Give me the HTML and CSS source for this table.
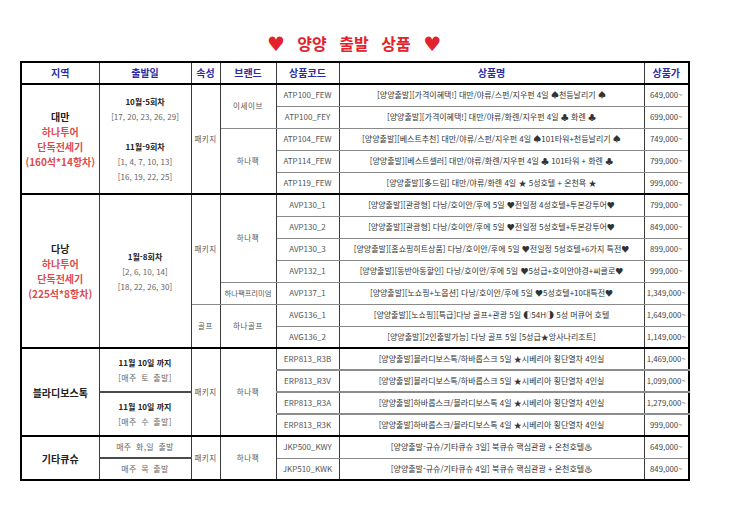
FILE: index.html
```html
<!DOCTYPE html>
<html lang="ko">
<head>
<meta charset="utf-8">
<title>양양 출발 상품</title>
<link rel="stylesheet" href="styles.css">
</head>
<body>
<div class="page">
  <h1 class="title"><span class="heart">♥</span> 양양 출발 상품 <span class="heart">♥</span></h1>
  <table class="grid">
    <colgroup>
      <col class="c-region"><col class="c-date"><col class="c-type"><col class="c-brand"><col class="c-code"><col class="c-name"><col class="c-price">
    </colgroup>
    <thead>
      <tr class="head">
        <th>지역</th><th>출발일</th><th>속성</th><th>브랜드</th><th>상품코드</th><th>상품명</th><th>상품가</th>
      </tr>
    </thead>
    <tbody>
      <tr class="sep">
        <td rowspan="5" class="region"><div class="rg">대만</div><div class="red">하나투어</div><div class="red">단독전세기</div><div class="red">(160석*14항차)</div></td>
        <td rowspan="5" class="date"><div class="dh">10월-5회차</div><div>[17, 20, 23, 26, 29]</div><div>&nbsp;</div><div class="dh">11월-9회차</div><div>[1, 4, 7, 10, 13]</div><div>[16, 19, 22, 25]</div></td>
        <td rowspan="5" class="type">패키지</td>
        <td rowspan="2" class="brand">이세이브</td>
        <td class="code">ATP100_FEW</td><td class="name">[양양출발][가격이혜택!] 대만/야류/스펀/지우펀 4일 ♠천등날리기 ♠</td><td class="price">649,000~</td>
      </tr>
      <tr><td class="code">ATP100_FEY</td><td class="name">[양양출발][가격이혜택!] 대만/야류/화롄/지우펀 4일 ♣ 화롄 ♣</td><td class="price">699,000~</td></tr>
      <tr>
        <td rowspan="3" class="brand">하나팩</td>
        <td class="code">ATP104_FEW</td><td class="name">[양양출발][베스트추천] 대만/야류/스펀/지우펀 4일 ♠101타워+천등날리기 ♠</td><td class="price">749,000~</td>
      </tr>
      <tr><td class="code">ATP114_FEW</td><td class="name">[양양출발][베스트셀러] 대만/야류/화롄/지우펀 4일 ♣ 101타워 + 화롄 ♣</td><td class="price">799,000~</td></tr>
      <tr><td class="code">ATP119_FEW</td><td class="name">[양양출발][多드림] 대만/야류/화롄 4일 ★ 5성호텔 + 온천욕 ★</td><td class="price">999,000~</td></tr>

      <tr class="sep">
        <td rowspan="7" class="region"><div class="rg">다낭</div><div class="red">하나투어</div><div class="red">단독전세기</div><div class="red">(225석*8항차)</div></td>
        <td rowspan="7" class="date"><div class="dh">1월-8회차</div><div>[2, 6, 10, 14]</div><div>[18, 22, 26, 30]</div></td>
        <td rowspan="5" class="type">패키지</td>
        <td rowspan="4" class="brand">하나팩</td>
        <td class="code">AVP130_1</td><td class="name">[양양출발][관광형] 다낭/호이안/후에 5일 ♥전일정 4성호텔+투본강투어♥</td><td class="price">799,000~</td>
      </tr>
      <tr><td class="code">AVP130_2</td><td class="name">[양양출발][관광형] 다낭/호이안/후에 5일 ♥전일정 5성호텔+투본강투어♥</td><td class="price">849,000~</td></tr>
      <tr><td class="code">AVP130_3</td><td class="name">[양양출발][홈쇼핑히트상품] 다낭/호이안/후에 5일 ♥전일정 5성호텔+6가지 특전♥</td><td class="price">899,000~</td></tr>
      <tr><td class="code">AVP132_1</td><td class="name">[양양출발][동반아동할인] 다낭/호이안/후에 5일 ♥5성급+호이안야경+씨클로♥</td><td class="price">999,000~</td></tr>
      <tr><td class="brand small">하나팩프리미엄</td><td class="code">AVP137_1</td><td class="name">[양양출발][노쇼핑+노옵션] 다낭/호이안/후에 5일 ♥5성호텔+10대특전♥</td><td class="price">1,349,000~</td></tr>
      <tr>
        <td rowspan="2" class="type">골프</td>
        <td rowspan="2" class="brand">하나골프</td>
        <td class="code">AVG136_1</td><td class="name">[양양출발][노쇼핑][특급]다낭 골프+관광 5일 ◐54H◑ 5성 머큐어 호텔</td><td class="price">1,649,000~</td>
      </tr>
      <tr><td class="code">AVG136_2</td><td class="name">[양양출발][2인출발가능] 다낭 골프 5일 [5성급★앙사나리조트]</td><td class="price">1,149,000~</td></tr>

      <tr class="sep">
        <td rowspan="4" class="region"><div class="rg">블라디보스톡</div></td>
        <td rowspan="2" class="date split"><div class="dh">11월 10일 까지</div><div class="wide">[매주 토 출발]</div></td>
        <td rowspan="4" class="type">패키지</td>
        <td rowspan="4" class="brand">하나팩</td>
        <td class="code">ERP813_R3B</td><td class="name">[양양출발]블라디보스톡/하바롭스크 5일 ★시베리아 횡단열차 4인실</td><td class="price">1,469,000~</td>
      </tr>
      <tr class="thick"><td class="code">ERP813_R3V</td><td class="name">[양양출발]블라디보스톡/하바롭스크 5일 ★시베리아 횡단열차 4인실</td><td class="price">1,099,000~</td></tr>
      <tr class="thick">
        <td rowspan="2" class="date"><div class="dh">11월 10일 까지</div><div class="wide">[매주 수 출발]</div></td>
        <td class="code">ERP813_R3A</td><td class="name">[양양출발]하바롭스크/블라디보스톡 4일 ★시베리아 횡단열차 4인실</td><td class="price">1,279,000~</td>
      </tr>
      <tr class="thick"><td class="code">ERP813_R3K</td><td class="name">[양양출발]하바롭스크/블라디보스톡 4일 ★시베리아 횡단열차 4인실</td><td class="price">999,000~</td></tr>

      <tr class="sep">
        <td rowspan="2" class="region"><div class="rg">기타큐슈</div></td>
        <td class="date split wide">매주 화,일 출발</td>
        <td rowspan="2" class="type">패키지</td>
        <td rowspan="2" class="brand">하나팩</td>
        <td class="code">JKP500_KWY</td><td class="name">[양양출발-규슈/기타큐슈 3일] 북큐슈 핵심관광 + 온천호텔♨</td><td class="price">649,000~</td>
      </tr>
      <tr><td class="date wide">매주 목 출발</td><td class="code">JKP510_KWK</td><td class="name">[양양출발-규슈/기타큐슈 4일] 북큐슈 핵심관광 + 온천호텔♨</td><td class="price">849,000~</td></tr>
    </tbody>
  </table>
</div>
</body>
</html>
```

FILE: styles.css
```css
html, body {
  margin: 0;
  padding: 0;
  background: #ffffff;
}

body {
  font-family: "Noto Sans CJK KR", "Noto Sans", sans-serif;
  color: #333333;
}

.page {
  width: 668px;
  padding: 33px 0 0 20px;
}

.title {
  margin: 0 0 8px 0;
  height: 20px;
  line-height: 20px;
  text-align: center;
  font-size: 16px;
  font-weight: 700;
  color: #e2232e;
  word-spacing: 8px;
}

.heart {
  font-family: "DejaVu Sans", sans-serif;
  font-size: 20px;
  vertical-align: -1px;
}

.grid {
  width: 668px;
  table-layout: fixed;
  border-collapse: collapse;
  border: 2px solid #000000;
}

.c-region { width: 78px; }
.c-date { width: 92px; }
.c-type { width: 29px; }
.c-brand { width: 56px; }
.c-code { width: 63px; }
.c-name { width: 305px; }
.c-price { width: 45px; }

.grid tr {
  height: 22px;
}

.grid th,
.grid td {
  padding: 0;
  text-align: center;
  vertical-align: middle;
  border-left: 1px solid #3a3a3a;
  border-right: 1px solid #3a3a3a;
  border-top: 1px solid #8a8a8a;
  border-bottom: 1px solid #8a8a8a;
  white-space: nowrap;
  overflow: hidden;
  line-height: 12px;
}

.grid th {
  font-size: 10px;
  font-weight: 700;
  color: #2b2ba6;
  border-bottom: 2px solid #000000;
}

.grid tr.sep td {
  border-top: 2px solid #000000;
}

.grid tr.thick td.code,
.grid tr.thick td.name,
.grid tr.thick td.price {
  border-top: 2px solid #8c8c8c;
}

.grid td.split {
  border-bottom: 2px solid #4a4a4a;
}

.region {
  font-size: 10px;
  font-weight: 700;
}

.region div {
  line-height: 15px;
}

.rg {
  color: #222222;
}

.red {
  color: #e04a4a;
}

.date {
  font-size: 8px;
  color: #666666;
}

.date div {
  line-height: 15px;
}

.date .dh {
  color: #222222;
  font-weight: 700;
}

.wide {
  word-spacing: 2px;
  letter-spacing: 0.3px;
}

.type {
  font-size: 7.5px;
  color: #555555;
  letter-spacing: 0.5px;
}

.brand {
  font-size: 7.5px;
  color: #555555;
  letter-spacing: 0.6px;
}

.brand.small {
  letter-spacing: 0;
  font-size: 7.3px;
}

.code {
  font-size: 8px;
  color: #555555;
}

.name {
  font-size: 8px;
  color: #333333;
}

.price {
  font-size: 7.8px;
  color: #444444;
}
```
